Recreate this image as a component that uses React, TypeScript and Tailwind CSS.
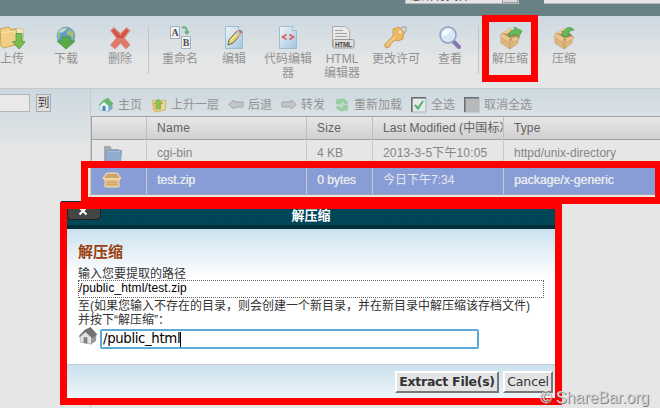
import React from 'react';

const ArrowDown = ({ x, y }: { x: number; y: number }) => (
  <path transform={`translate(${x} ${y})`} d="M3 0h6v8h3.500L6 15.500-.5 8H3z" fill="#78bd50" stroke="#5ba34a" />
);

const FolderDownIcon = () => (
  <svg width="26" height="26" viewBox="0 0 26 26">
    <path d="M2 6l19-3 4 2-2 15-18 1z" fill="#f1e6bd" stroke="#cfbd84" />
    <path d="M1 4l9-2 2 3 5-1 1 15-13 4-3-2z" fill="#f0d083" stroke="#c9a14f" />
    <path d="M3 8l13-2 1 12" fill="none" stroke="#f7e4ad" />
    <ArrowDown x={14} y={8.500} />
  </svg>
);

const GlobeIcon = () => (
  <svg width="26" height="26" viewBox="0 0 26 26">
    <circle cx="13" cy="11" r="9" fill="#5f9bcc" stroke="#7badd0" />
    <path d="M5 8c2-5 6-6 10-5l-4 4-4 1v5l-2 1zM16 4l5 4-1 7-4-5-3-1z" fill="#a2bd78" />
    <path d="M6 6c3-3 6-3 8-2l-6 4z" fill="#cae4ed" opacity=".8" />
    <path d="M9 12h8v4h5l-9 8-9-8h5z" fill="#5aab47" stroke="#4c9a4d" />
  </svg>
);

const DeleteIcon = () => (
  <svg width="26" height="26" viewBox="0 0 26 26">
    <path d="M3.500 5.500L7 2.500l6.500 6 6-6 3.500 3-5.500 7.500L23 20l-4 4-5.500-6L8 24l-4.500-4 6-7z" fill="#e07a68" stroke="#d59089" />
    <path d="M5 5.500L7 4l6.500 7 6-7 2 1.500-6 8-3-1-2 1z" fill="#c9463f" opacity=".8" />
  </svg>
);

const RenameIcon = () => (
  <svg width="26" height="26" viewBox="0 0 26 26">
    <rect x="3.500" y="1.500" width="9" height="12" fill="#eff1f2" stroke="#a5b3c1" />
    <rect x="14.500" y="11.500" width="9" height="12" fill="#eff1f2" stroke="#a5b3c1" />
    <text x="4.500" y="11" fontSize="10" fontWeight="bold" fontFamily="Liberation Serif" fill="#4e5257">A</text>
    <text x="15.800" y="21" fontSize="10" fontWeight="bold" fontFamily="Liberation Serif" fill="#4e5257">B</text>
    <path d="M15 3c3-2 5 0 5 4" fill="none" stroke="#65b37e" strokeWidth="2" />
    <path d="M16.500 6.500h6.500L20 10z" fill="#65b37e" />
  </svg>
);

const PageIcon = ({ children }: { children: React.ReactNode }) => (
  <svg width="26" height="26" viewBox="0 0 26 26">
    <defs>
      <linearGradient id="page" x2="1" y2="1">
        <stop stopColor="#f1f4f5" />
        <stop offset="1" stopColor="#a1c5e0" />
      </linearGradient>
    </defs>
    <path d="M4.500 1.500h13l4 4v18h-17z" fill="url(#page)" stroke="#9cbed4" />
    <path d="M17.500 1.500v4h4" fill="#dbe9f0" stroke="#9cbed4" />
    {children}
  </svg>
);

const EditIcon = () => (
  <PageIcon>
    <path d="M7 20l1-5 8-9 4 3-8 9z" fill="#e9d36d" stroke="#666557" />
    <path d="M14 9l3-4 4 3-3 4z" fill="#c6bab5" />
    <path d="M18 5l3 3" stroke="#bd5b58" strokeWidth="1.500" />
    <path d="M9 16l8-8" stroke="#fff3a8" />
  </PageIcon>
);

const CodeIcon = () => (
  <PageIcon>
    <path d="M11.500 9.500L7.500 12l4 2.500M14.500 9.500l4 2.500-4 2.500" fill="none" stroke="#dc5b5b" strokeWidth="1.600" />
  </PageIcon>
);

const HtmlIcon = () => (
  <svg width="26" height="26" viewBox="0 0 26 26">
    <path d="M3.500 1.500h13l4 4v16h-17z" fill="#e9e9e9" stroke="#adadad" />
    <path d="M6 5.500h8M6 8.500h12M6 11.500h12" stroke="#a2a2a2" />
    <rect x="4" y="14.500" width="21" height="8.500" rx="1.500" fill="#dedede" stroke="#969696" />
    <text x="6" y="21.500" fontSize="6.500" fontWeight="bold" fontFamily="Liberation Sans" textLength="17" fill="#494949">HTML</text>
  </svg>
);

const KeyIcon = () => (
  <svg width="26" height="26" viewBox="0 0 26 26">
    <path d="M18 6c-1-6 7-5 5-1l-2 4" fill="none" stroke="#acacac" strokeWidth="1.300" />
    <path d="M10 4l6-2 5 5-1 7-5 2-3-1-2 2-2 1-1 3-2 2-3-1v-3l8-8z" fill="#ebb85f" stroke="#cb9f64" />
    <path d="M4 20l8-8" stroke="#f5d690" strokeWidth="1.500" />
    <circle cx="17" cy="7" r="1.500" fill="#e5e4df" />
  </svg>
);

const MagnifierIcon = () => (
  <svg width="26" height="26" viewBox="0 0 26 26">
    <path d="M17 17l5 5" stroke="#8279ae" strokeWidth="4" strokeLinecap="round" />
    <circle cx="11" cy="10" r="8" fill="#d7e7f5" stroke="#8f9ec2" strokeWidth="1.500" />
    <path d="M5 9c1-4 6-6 10-3-3 0-4 5-9 5z" fill="#f7fafc" />
  </svg>
);

const BoxIcon = ({ children }: { children: React.ReactNode }) => (
  <svg width="26" height="26" viewBox="0 0 26 26">
    <path d="M4 9l9-6 9 8-8 5z" fill="#ad8255" />
    <path d="M4 13l9 3 8-4v6l-8 6-9-6z" fill="#dfb77c" stroke="#c79e68" strokeWidth=".7" />
    <path d="M3 12l2-4 9 5-3 4zM14 13l8-2 1 2-7 5z" fill="#eac58d" stroke="#cba26e" strokeWidth=".7" />
    <path d="M5 8l8-5 3 2-6 4z" fill="#eaca95" />
    <path d="M13 17v7" stroke="#c49863" />
    {children}
  </svg>
);

const ExtractIcon = () => (
  <BoxIcon>
    <path d="M12 12c0-5 2-7 6-7l-1-3 8 4-4 7-1-3c-3-1-5 0-8 2z" fill="#64ba58" stroke="#519c46" strokeWidth=".8" />
  </BoxIcon>
);

const CompressIcon = () => (
  <BoxIcon>
    <path d="M23 5c-3-4-9-3-10 2l-2-1 1 6 8-2-3-1c1-3 3-4 6-4z" fill="#64b85d" stroke="#519c46" strokeWidth=".8" />
  </BoxIcon>
);

const HouseIcon = ({ gray = false, size = 16 }: { gray?: boolean; size?: number }) => (
  <svg width={size} height={size} viewBox="0 0 16 16" className="shrink-0">
    <path d="M1.500 8l4-4.500L11 9v5.500l-9-1.500z" fill={gray ? '#e2e2e2' : '#e4f0f6'} stroke={gray ? '#b5b5b5' : '#8fb7d4'} strokeWidth=".7" />
    <path d="M10.500 9l2.500-1.500 1.500.5v4l-4 2.500z" fill={gray ? '#999' : '#7caacb'} />
    <path d="M5.500 3L10 .8l5.500 6-4 3-5.500-5-4.500 4L.8 8z" fill={gray ? '#737373' : '#66b56a'} />
    <path d="M4.500 9h3v5l-3-.5z" fill={gray ? '#808080' : '#4687b0'} />
  </svg>
);

const FolderUpIcon = () => (
  <svg width="16" height="16" viewBox="0 0 16 16">
    <path d="M1 4l4-1 2 1 8-1-1 10-10 2z" fill="#ead68e" stroke="#ceb574" />
    <path d="M1 4l4 3v8l-3-2z" fill="#e6bd65" />
    <path d="M7.500 2l4 4.500h-2V12h-4V6.500h-2z" fill="#8bc359" stroke="#72aa50" strokeWidth=".7" />
  </svg>
);

const BackIcon = ({ flip = false }: { flip?: boolean }) => (
  <svg width="16" height="16" viewBox="0 0 16 16" className={flip ? '-scale-x-100' : ''}>
    <path d="M.7 7.500L6 3v2h9v5H6v2z" fill="#c4c7c9" stroke="#a2a6a9" />
  </svg>
);

const ReloadIcon = () => (
  <svg width="16" height="16" viewBox="0 0 16 16">
    <path d="M2 7l1-5 2 1c3-2 7-1 9 3l-3 1C9 5 8 5 6 6l2 1.500zM14 8l-1 6-2-1c-3 2-7 1-9-3l3-1c2 2 3 2 5 1L8 8.500z" fill="#98d1a2" stroke="#87c092" strokeWidth=".5" />
  </svg>
);

const CheckIcon = ({ checked = false }: { checked?: boolean }) => (
  <svg width="16" height="16" viewBox="0 0 16 16">
    <path d="M1 1h14v14H1z" fill={checked ? '#e6e9e8' : '#b8b8b8'} stroke="#a7b4bd" />
    <path d="M.8 15V.8H15" fill="none" stroke="#686e73" strokeWidth="1.500" />
    {checked && <path d="M4 8l3 3.500L12 4" fill="none" stroke="#50b46b" strokeWidth="2" />}
  </svg>
);

const FolderIcon = () => (
  <svg width="20" height="18" viewBox="0 0 20 18">
    <path d="M1 16V1h6l2 3h7v12z" fill="#a6a9ad" />
    <path d="M3.500 5.500h15l-1 11h-15z" fill="#8eacd0" stroke="#7f9bbf" />
    <path d="M4 6.500h13.500" stroke="#a5bddc" />
  </svg>
);

const ZipIcon = () => (
  <svg width="20" height="18" viewBox="0 0 20 18">
    <path d="M4.500 2h11L19 7.500h-2V16H3V7.500H.8z" fill="#e2bb82" stroke="#f2dbb1" />
    <path d="M5 3h10l2 4H3z" fill="#c9a574" />
    <path d="M2 7h16v2H2z" fill="#f1d4a4" />
    <path d="M4 11.500h12M4 13.500h12" stroke="#d0a46c" />
  </svg>
);

const tools = [
  { label: '上传', icon: <FolderDownIcon /> },
  { label: '下载', icon: <GlobeIcon /> },
  { label: '删除', icon: <DeleteIcon /> },
  null,
  { label: '重命名', icon: <RenameIcon /> },
  { label: '编辑', icon: <EditIcon /> },
  { label: '代码编辑器', icon: <CodeIcon /> },
  { label: 'HTML\n编辑器', icon: <HtmlIcon /> },
  { label: '更改许可', icon: <KeyIcon /> },
  { label: '查看', icon: <MagnifierIcon /> },
  null,
  { label: '解压缩', icon: <ExtractIcon /> },
  { label: '压缩', icon: <CompressIcon /> }
];

const actions = [
  { label: '主页', icon: <HouseIcon /> },
  { label: '上升一层', icon: <FolderUpIcon /> },
  { label: '后退', icon: <BackIcon /> },
  { label: '转发', icon: <BackIcon flip /> },
  { label: '重新加载', icon: <ReloadIcon /> },
  { label: '全选', icon: <CheckIcon checked /> },
  { label: '取消全选', icon: <CheckIcon /> }
];

const Toolbar = () => (
  <div className="-ml-[15px] flex h-[73px] shrink-0 border-b border-[#c5c8c9] bg-linear-to-b from-[#ccd9e1] to-[#e6e6e6] to-65%">
    {tools.map((tool, i) =>
      tool ? (
        <div key={i} className="flex w-[54px] shrink-0 flex-col items-center pt-[9px]">
          {tool.icon}
          <span className="w-[50px] pt-px text-center leading-[14px] whitespace-pre-line text-[#929292]">{tool.label}</span>
        </div>
      ) : (
        <div key={i} className="w-1.5 shrink-0 pt-2.5">
          <div className="ml-px h-12 w-px bg-[#c2c4c5]" />
        </div>
      )
    )}
  </div>
);

const FileTable = () => (
  <div className="border-l border-[#a2a4a5]">
    <div className="grid h-6 grid-cols-[55px_160px_66px_131px_1fr] border-y border-[#9fa0a1] bg-linear-to-b from-[#e7e7e7] to-[#d0d0d0] leading-[23px] text-[#626262]">
      <div className="border-r border-[#bebebe]" />
      <div className="border-r border-[#bebebe] pl-2.5 tracking-[.3px]">Name</div>
      <div className="border-r border-[#bebebe] pl-2.5 tracking-[.2px]">Size</div>
      <div className="overflow-hidden border-r border-[#bebebe] pl-2.5 whitespace-nowrap tracking-[.1px]">Last Modified (中国标准</div>
      <div className="pl-2.5 tracking-[.1px]">Type</div>
    </div>
    <div className="grid h-[27px] grid-cols-[55px_160px_66px_131px_1fr] leading-[26px] text-[#858585]">
      <div className="border-r border-[#c8c8c8] pt-[5px] pl-[11px]"><FolderIcon /></div>
      <div className="border-r border-[#c8c8c8] pl-2.5">cgi-bin</div>
      <div className="border-r border-[#c8c8c8] pl-2.5">4 KB</div>
      <div className="border-r border-[#c8c8c8] pl-2.5 whitespace-nowrap tracking-[.15px]">2013-3-5下午10:05</div>
      <div className="pl-2.5">httpd/unix-directory</div>
    </div>
    <div className="grid h-7 grid-cols-[55px_160px_66px_131px_1fr] border-b border-[#a4a7ae] bg-[#889cd5] leading-[26px] text-[#e5e8ee] [text-shadow:.4px_0_currentColor]">
      <div className="border-r border-[#c8cbd0] pt-1 pl-2.5"><ZipIcon /></div>
      <div className="border-r border-[#c8cbd0] pl-2.5">test.zip</div>
      <div className="border-r border-[#c8cbd0] pl-2.5">0 bytes</div>
      <div className="border-r border-[#c8cbd0] pl-2.5 [text-shadow:none]">今日下午7:34</div>
      <div className="pl-2.5 tracking-[.1px]">package/x-generic</div>
    </div>
  </div>
);

const ExtractDialog = () => (
  <div className="absolute top-[202px] left-[60px] flex h-[203px] w-[502px] flex-col border-7 border-[#ff0000] bg-white text-[#333]">
    <div className="relative h-5 shrink-0 border-b-4 border-[#002e3b] bg-[repeating-linear-gradient(135deg,#004251_0_1px,#00495a_1px_3px)] text-center text-[13px] leading-[14px] font-bold text-white">
      解压缩
      <div className="absolute top-0 left-0 h-[11px] w-[34px] overflow-hidden rounded-b-sm border border-t-0 border-[#202020] bg-[#454545]">
        <svg width="10" height="7" viewBox="0 0 10 7" className="ml-2.5">
          <path d="M2-1l3 3 3-3M1.500 5.500L5 2l3.500 3.500" fill="none" stroke="#fff" strokeWidth="2" />
        </svg>
      </div>
    </div>
    <div className="h-[135px] shrink-0 bg-linear-to-b from-[#cbe1ee] to-white to-35% pt-[14px] pl-[11px]">
      <h2 className="h-[23px] text-[15px] leading-[18px] font-bold text-[#993e0c]">解压缩</h2>
      <div className="h-[14px] leading-[16px]">输入您要提取的路径</div>
      <div className="h-[18px] w-[466px] border border-dotted border-[#666] leading-[14px] tracking-[.12px] text-black">/public_html/test.zip</div>
      <div className="h-[14px] leading-[16px] whitespace-nowrap">至(如果您输入不存在的目录，则会创建一个新目录，并在新目录中解压缩该存档文件)</div>
      <div className="h-[14px] leading-[16px]">并按下“解压缩”：</div>
      <div className="flex items-start">
        <HouseIcon gray size={20} />
        <div className="mt-[3px] ml-0.5 flex h-5 w-[379px] items-center rounded-[2px] border-2 border-[#5ba9d6] bg-white pl-px text-[13.300px] tracking-[-.35px] text-black [font-family:'DejaVu_Sans',sans-serif]">
          /public_html<span className="h-[15px] w-px bg-black" />
        </div>
      </div>
    </div>
    <div className="flex flex-1 justify-end gap-1 border-t border-[#c7cacc] bg-linear-to-b from-[#cbe1ee] to-[#edf5f9] pt-[6px] pr-0.5 whitespace-nowrap [font-family:'DejaVu_Sans',sans-serif]">
      <button className="h-[22px] w-[104px] border-2 border-t-white border-r-[#777] border-b-[#777] border-l-white bg-[#e4e4e4] text-[12.500px] leading-[18px] font-bold tracking-[-.25px]">Extract File(s)</button>
      <button className="h-[22px] w-[50px] border-2 border-t-white border-r-[#777] border-b-[#777] border-l-white bg-[#e4e4e4] text-[12.500px] leading-[18px] tracking-[-.1px]">Cancel</button>
    </div>
  </div>
);

const App: React.FC = () => {
  return (
    <div className="relative flex h-[408px] w-[660px] flex-col overflow-hidden bg-[#e6e6e6] text-[12px] [font-family:'Liberation_Sans','Noto_Sans_CJK_SC',sans-serif]">
      <div className="flex h-4 shrink-0 items-start bg-[#688185] pl-[374px] text-white">
        <span className="-mt-[12px] w-[31px] leading-4 tracking-[.6px]">......</span>
        <div className="flex h-1 w-[114px] justify-between overflow-hidden border border-t-0 border-[#b4babb] bg-[#e6e6e6] pl-1 text-[#444]">
          <span className="-mt-[12px] leading-4">您所有文件</span>
          <span className="w-4 border border-t-0 border-[#a3a3a3] bg-[#d9d9d9]" />
        </div>
        <span className="-mt-[12px] ml-2 w-[17px] leading-4">. .</span>
        <div className="h-1 flex-1 border-b border-[#b4babb] bg-[#e6e6e6]" />
      </div>

      <Toolbar />

      <div className="flex flex-1">
        <div className="flex h-full w-[91px] shrink-0 items-start border-r border-[#c7cacb] bg-linear-to-b from-[#ccd9e1] to-[#e6e6e6] to-20% pt-[5px]">
          <div className="h-[18px] w-[30px] border border-l-0 border-[#b4b7b9] bg-[#e9e9e9]" />
          <button className="ml-1.5 h-[18px] w-[15px] border border-[#acacac] bg-[#dedede] text-[12px] leading-4 text-[#444]">到</button>
        </div>
        <div className="min-w-0 flex-1">
          <div className="flex h-[27px] items-center gap-[9px] bg-linear-to-b from-[#ccd9e1] to-[#dce1e4] pt-1 pl-[7px]">
            {actions.map((action) => (
              <div key={action.label} className="flex shrink-0 items-center gap-1 leading-4 whitespace-nowrap text-[#929292]">
                {action.icon}
                {action.label}
              </div>
            ))}
          </div>
          <FileTable />
        </div>
      </div>

      {/* Highlighted steps */}
      <div className="absolute top-[15px] left-[482px] h-[67px] w-14 border-7 border-[#ff0000]" />
      <div className="absolute top-[161px] left-[81px] h-[43px] w-[581px] border-7 border-[#ff0000]" />
      <div className="absolute top-[201px] left-[61px] h-px w-5 bg-[#173039]" />
      <ExtractDialog />
      <div className="absolute top-[388px] left-[540px] text-[15.800px] leading-5 whitespace-nowrap text-[#d6d6d6] [text-shadow:1px_1px_0_#808080]">
        © ShareBar.org
      </div>
    </div>
  );
};

export default App;
